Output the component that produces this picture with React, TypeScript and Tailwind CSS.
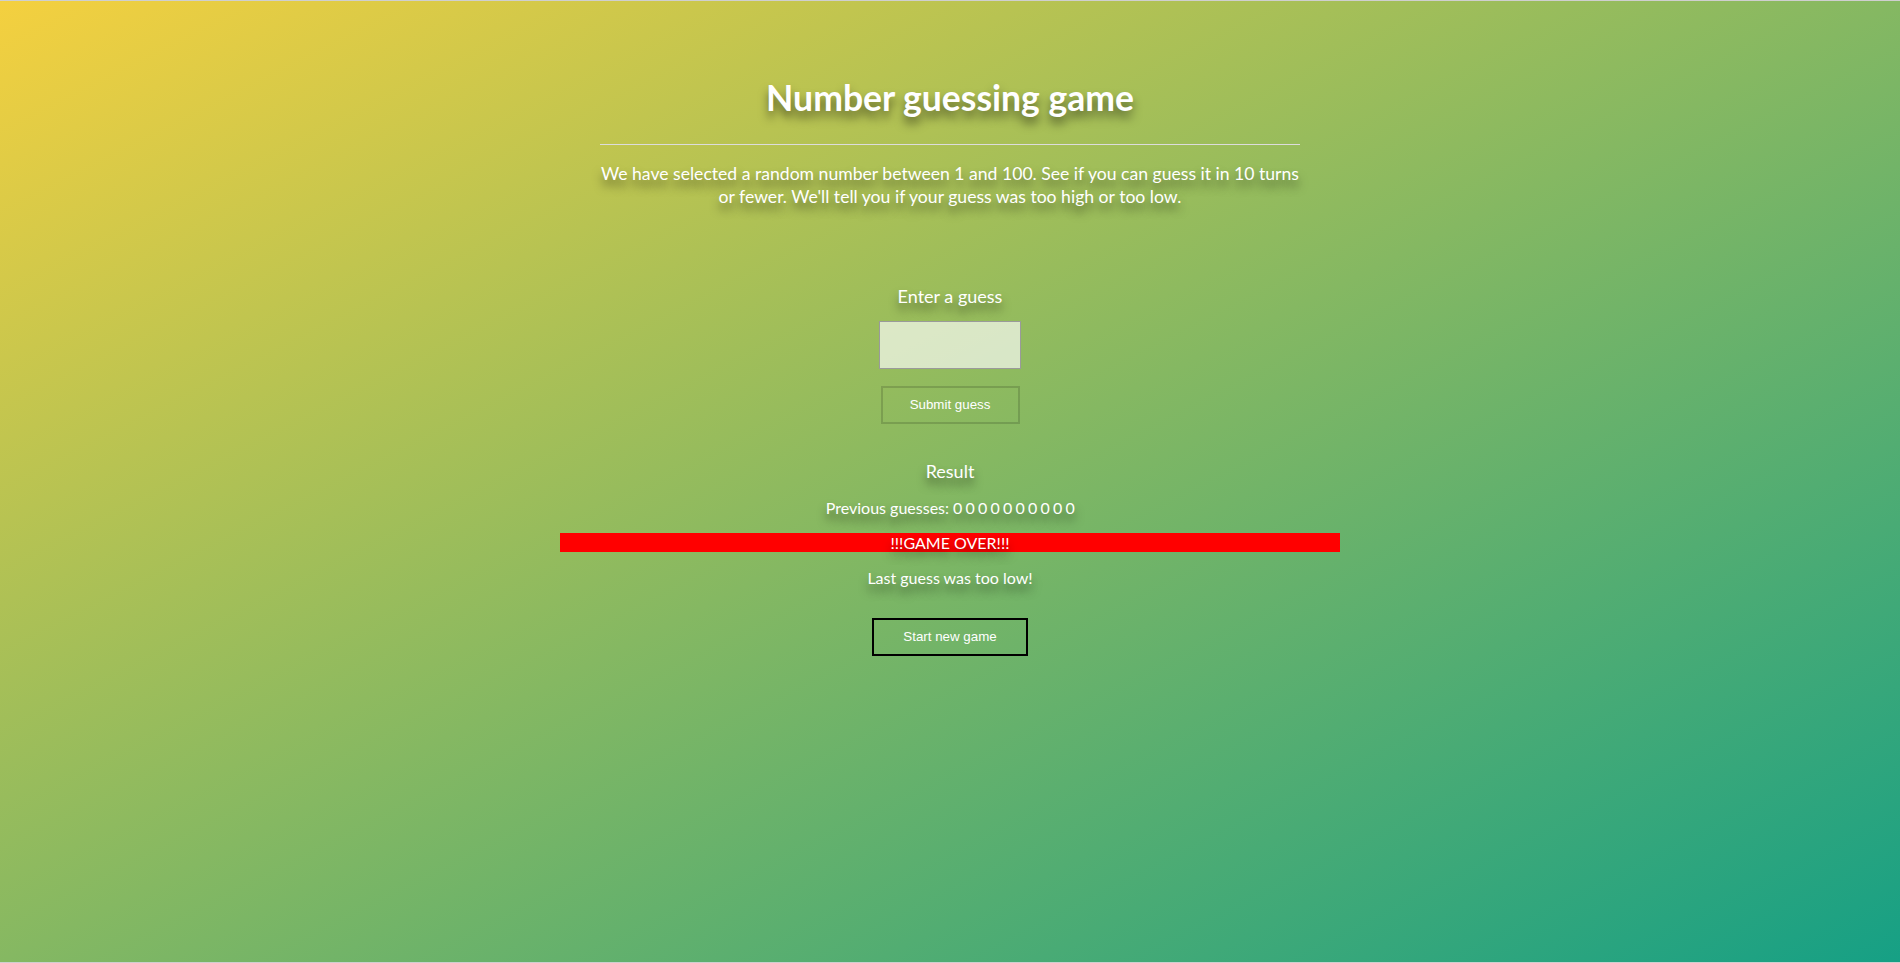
export default function App() {
  const guesses = [0, 0, 0, 0, 0, 0, 0, 0, 0, 0];
  const shadow = "[text-shadow:0_7px_10px_rgba(0,0,0,0.5)]";

  return (
    <div className="h-[963px] border-y border-[#cfcfcf] bg-[linear-gradient(to_bottom_right,#F4D03F,#16A085)] font-['Lato','Noto_Sans',sans-serif] text-white">
      {/* Header */}
      <div className="w-[700px] mx-auto text-center pt-[77px]">
        <h1 className={`text-[35.5px] leading-[40px] font-bold ${shadow}`}>
          Number guessing game
        </h1>
        <hr className="mt-[26px] border-0 border-t border-[#dcdcdc]" />
        <p className={`mt-[17px] text-[17.6px] leading-[23px] ${shadow}`}>
          We have selected a random number between 1 and 100. See if you can
          guess it in 10 turns or fewer. We'll tell you if your guess was too
          high or too low.
        </p>
      </div>

      {/* Form */}
      <div className="flex flex-col items-center mt-[76px]">
        <label className={`text-[18px] leading-[24px] ${shadow}`}>Enter a guess</label>
        <input
          type="text"
          className="mt-[13px] w-[142px] h-[48px] bg-white/65 border border-[#9a9a9a] outline-none"
        />
        <button className="mt-[17px] w-[139px] h-[38px] border-2 border-black/15 font-['Liberation_Sans',Arial,sans-serif] text-[13.33px] text-white">
          Submit guess
        </button>
      </div>

      {/* Results */}
      <div className="flex flex-col items-center mt-[35px]">
        <p className={`text-[18px] leading-[24px] ${shadow}`}>Result</p>
        <p className={`mt-[14px] text-[16px] leading-[22px] ${shadow}`}>
          Previous guesses: <span className="tracking-[-0.45px]">{guesses.join(" ")}</span>
        </p>
        <p className={`mt-[14px] w-[780px] h-[19px] bg-[#ff0000] text-center text-[16px] leading-[19px] ${shadow}`}>
          !!!GAME OVER!!!
        </p>
        <p className={`mt-[15px] text-[16px] leading-[22px] ${shadow}`}>
          Last guess was too low!
        </p>
        <button className="mt-[29px] w-[156px] h-[38px] border-2 border-black font-['Liberation_Sans',Arial,sans-serif] text-[13.33px] text-white">
          Start new game
        </button>
      </div>
    </div>
  );
}
